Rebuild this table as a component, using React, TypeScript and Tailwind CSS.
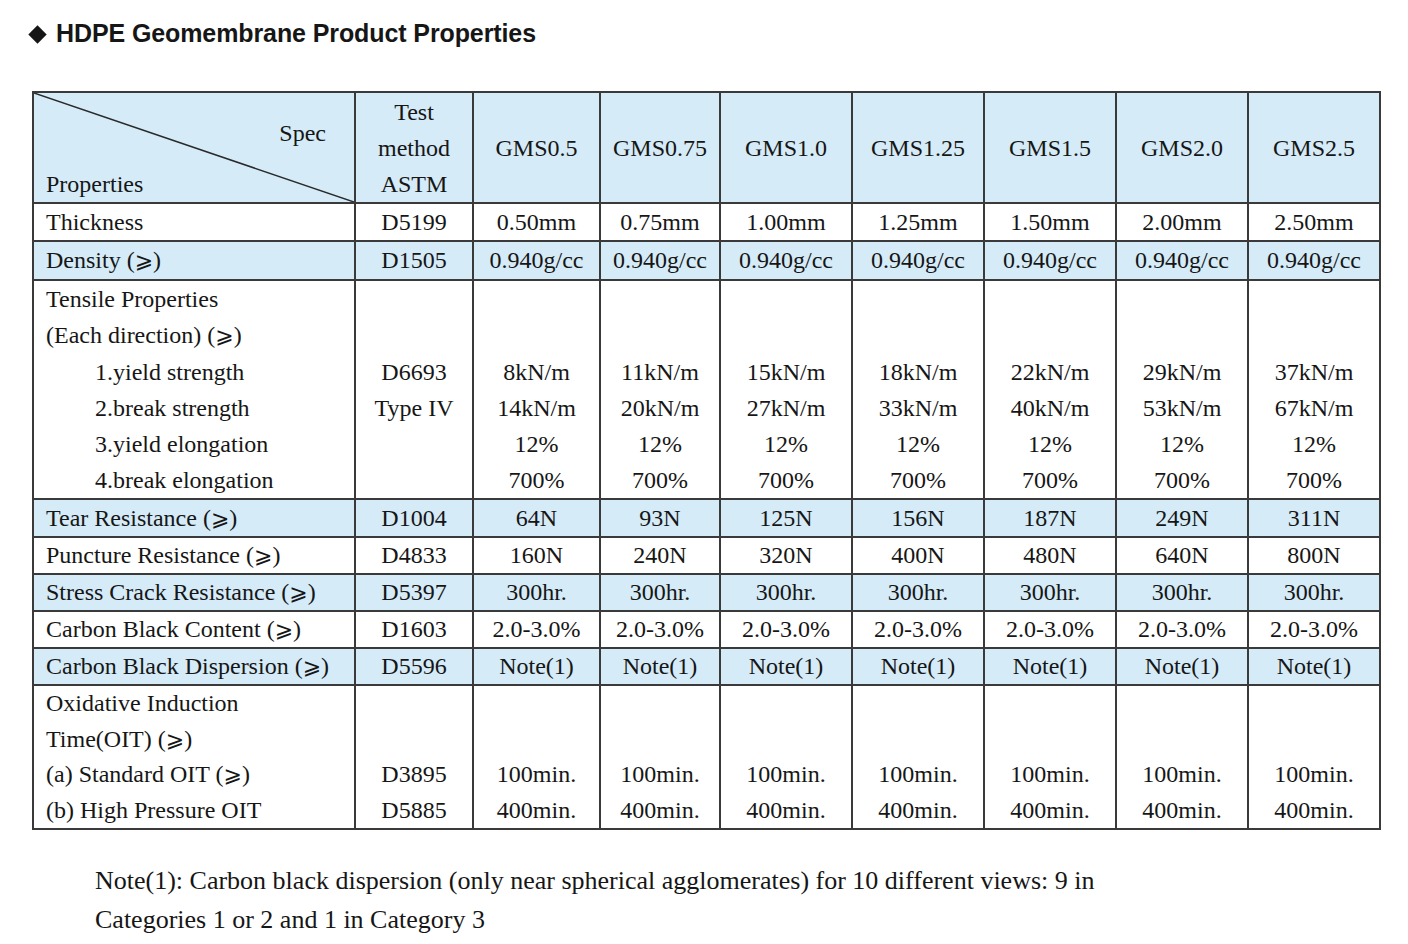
import React from "react";

const specs = ["GMS0.5", "GMS0.75", "GMS1.0", "GMS1.25", "GMS1.5", "GMS2.0", "GMS2.5"];
const colWidths = [322, 118, 127, 120, 132, 132, 132, 132, 132];

type Row = { label: string; method: string; values: string[]; blue?: boolean; h: number };

const simpleTop: Row[] = [
  { label: "Thickness", method: "D5199", values: ["0.50mm", "0.75mm", "1.00mm", "1.25mm", "1.50mm", "2.00mm", "2.50mm"], h: 38 },
  { label: "Density", method: "D1505", values: Array(7).fill("0.940g/cc"), blue: true, h: 39 },
];

const simpleMid: Row[] = [
  { label: "Tear Resistance", method: "D1004", values: ["64N", "93N", "125N", "156N", "187N", "249N", "311N"], blue: true, h: 38 },
  { label: "Puncture Resistance", method: "D4833", values: ["160N", "240N", "320N", "400N", "480N", "640N", "800N"], h: 37 },
  { label: "Stress Crack Resistance", method: "D5397", values: Array(7).fill("300hr."), blue: true, h: 37 },
  { label: "Carbon Black Content", method: "D1603", values: Array(7).fill("2.0-3.0%"), h: 37 },
  { label: "Carbon Black Dispersion", method: "D5596", values: Array(7).fill("Note(1)"), blue: true, h: 37 },
];

const yields = ["8kN/m", "11kN/m", "15kN/m", "18kN/m", "22kN/m", "29kN/m", "37kN/m"];
const breaks = ["14kN/m", "20kN/m", "27kN/m", "33kN/m", "40kN/m", "53kN/m", "67kN/m"];

const cell = "border-2 border-[#3a3a3a] text-center align-middle p-0";

// slanted "greater than or equal" as printed in the sheet
function Gte() {
  return (
    <span>
      (<span style={{ fontFamily: '"DejaVu Serif", "DejaVu Sans", serif' }} className="text-[22px]">⩾</span>)
    </span>
  );
}

function SimpleRow({ r }: { r: Row }) {
  return (
    <tr className={r.blue ? "bg-[#d5ebf8]" : "bg-white"} style={{ height: r.h }}>
      <td className={`${cell} text-left pl-[12px] leading-[33px]`}>
        {r.label}
        {r.label !== "Thickness" && (
          <>
            {" "}
            <Gte />
          </>
        )}
      </td>
      <td className={`${cell} leading-[33px]`}>{r.method}</td>
      {r.values.map((v, i) => (
        <td key={i} className={`${cell} leading-[33px]`}>{v}</td>
      ))}
    </tr>
  );
}

export default function App() {
  return (
    <div className="min-h-[944px] bg-white pt-[20px] pl-[28px] text-[#161616]">
      <h1
        className="flex items-center h-[28px] text-[25px] font-bold tracking-[-0.1px]"
        style={{ fontFamily: '"Liberation Sans", Arial, sans-serif' }}
      >
        <span className="inline-block w-[13px] h-[13px] bg-[#161616] rotate-45 ml-[3px] mr-[12px]" />
        HDPE Geomembrane Product Properties
      </h1>

      <table
        className="mt-[43px] ml-[4px] border-collapse table-fixed w-[1349px] text-[24px] leading-[36px]"
        style={{ fontFamily: '"Liberation Serif", "Times New Roman", serif' }}
      >
        <colgroup>
          {colWidths.map((w, i) => (
            <col key={i} style={{ width: w }} />
          ))}
        </colgroup>
        <tbody>
          <tr className="bg-[#d5ebf8] h-[110px]">
            <td className={`${cell} relative text-left`}>
              <svg className="absolute inset-0 w-full h-full" preserveAspectRatio="none" viewBox="0 0 100 100">
                <line x1="0" y1="0" x2="100" y2="100" stroke="#2a2a2a" strokeWidth="1.5" vectorEffect="non-scaling-stroke" />
              </svg>
              <div className="flex flex-col h-full">
                <div className="h-[22px]" />
                <div className="text-right pr-[28px]">Spec</div>
                <div className="h-[15px]" />
                <div className="pl-[12px]">Properties</div>
              </div>
            </td>
            <td className={cell}>
              <div>Test</div>
              <div>method</div>
              <div>ASTM</div>
            </td>
            {specs.map((s) => (
              <td key={s} className={cell}>{s}</td>
            ))}
          </tr>

          {simpleTop.map((r) => (
            <SimpleRow key={r.label} r={r} />
          ))}

          <tr className="bg-white h-[219px]">
            <td className={`${cell} text-left pl-[12px]`}>
              <div>Tensile Properties</div>
              <div>(Each direction) <Gte /></div>
              <div className="pl-[49px]">1.yield strength</div>
              <div className="pl-[49px]">2.break strength</div>
              <div className="pl-[49px]">3.yield elongation</div>
              <div className="pl-[49px]">4.break elongation</div>
            </td>
            <td className={cell}>
              <div className="h-[72px]" />
              <div>D6693</div>
              <div>Type IV</div>
              <div className="h-[72px]" />
            </td>
            {yields.map((y, i) => (
              <td key={i} className={cell}>
                <div className="h-[72px]" />
                <div>{y}</div>
                <div>{breaks[i]}</div>
                <div>12%</div>
                <div>700%</div>
              </td>
            ))}
          </tr>

          {simpleMid.map((r) => (
            <SimpleRow key={r.label} r={r} />
          ))}

          <tr className="bg-white h-[144px]">
            <td className={`${cell} text-left pl-[12px] leading-[35.5px]`}>
              <div>Oxidative Induction</div>
              <div>Time(OIT) <Gte /></div>
              <div>(a) Standard OIT <Gte /></div>
              <div>(b) High Pressure OIT</div>
            </td>
            <td className={`${cell} leading-[35.5px]`}>
              <div className="h-[71px]" />
              <div>D3895</div>
              <div>D5885</div>
            </td>
            {specs.map((s) => (
              <td key={s} className={`${cell} leading-[35.5px]`}>
                <div className="h-[71px]" />
                <div>100min.</div>
                <div>400min.</div>
              </td>
            ))}
          </tr>
        </tbody>
      </table>

      <p
        className="mt-[31px] pl-[67px] w-[1200px] text-[26px] leading-[39px]"
        style={{ fontFamily: '"Liberation Serif", "Times New Roman", serif' }}
      >
        Note(1): Carbon black dispersion (only near spherical agglomerates) for 10 different views: 9 in
        <br />
        Categories 1 or 2 and 1 in Category 3
      </p>
    </div>
  );
}
